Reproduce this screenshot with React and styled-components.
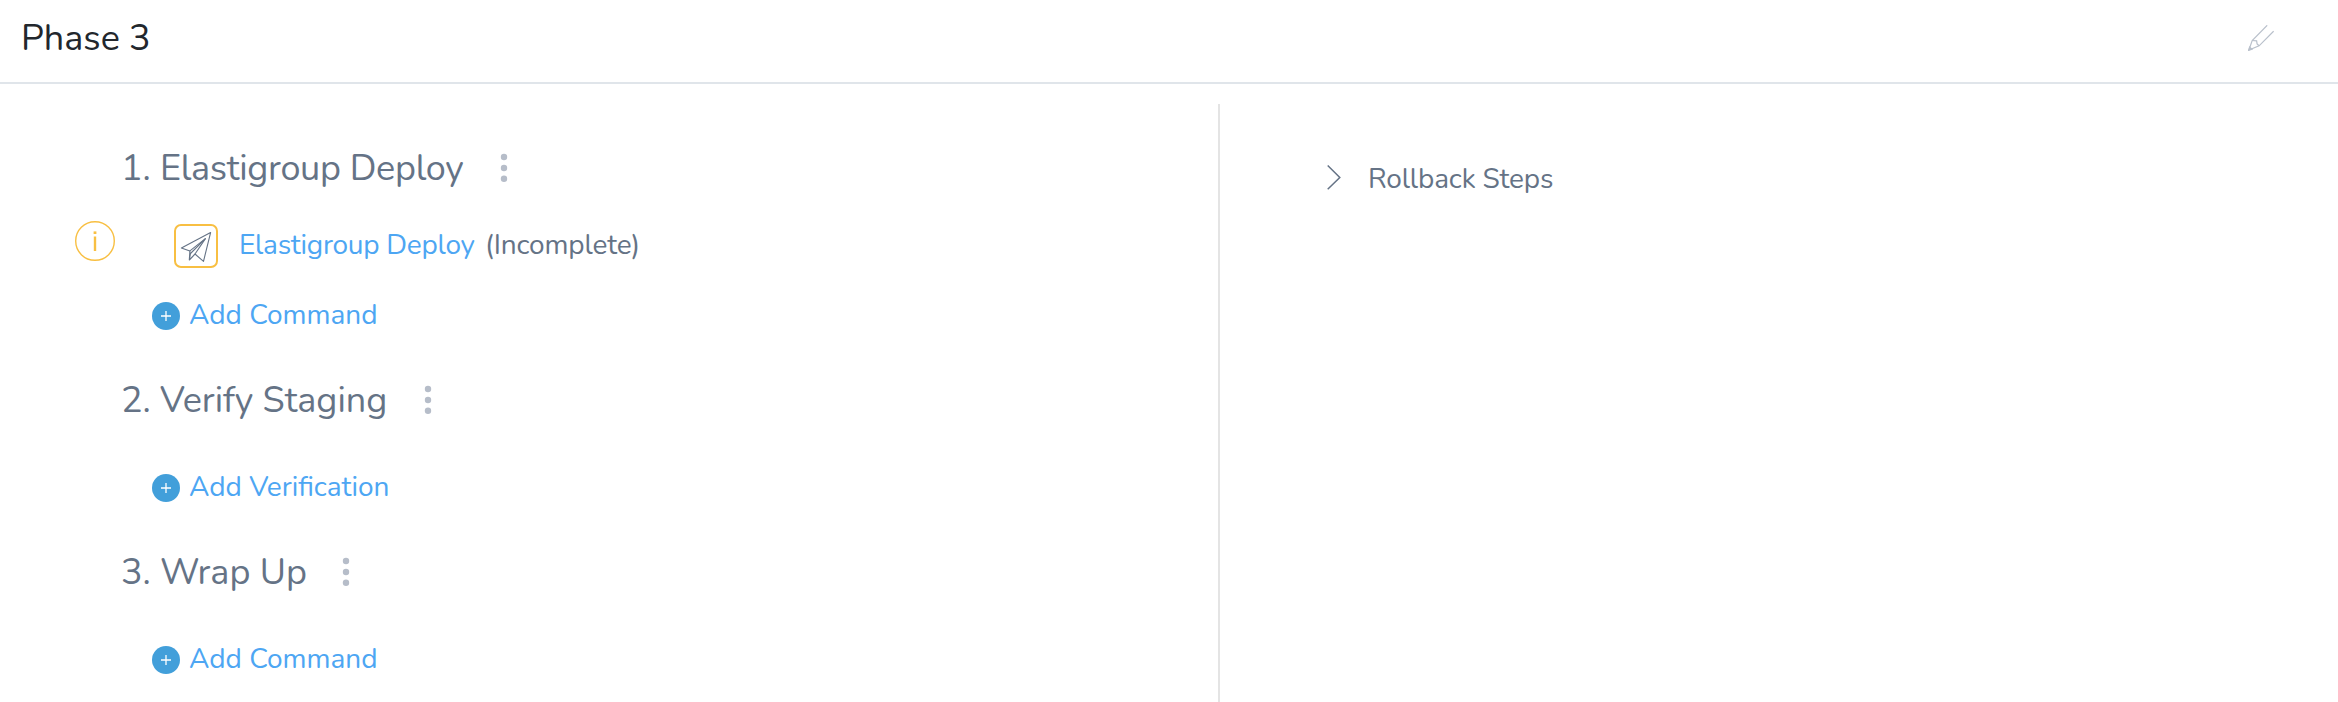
import React from "react";
import styled, { createGlobalStyle } from "styled-components";

const GlobalStyle = createGlobalStyle`
  *, *::before, *::after { box-sizing: border-box; }
  body {
    margin: 0;
    background: #fff;
    color: #657386;
    font-family: Nunito, Lato, "Liberation Sans", sans-serif;
    overflow: hidden;
  }
`;

const Page = styled.div`
  display: flex;
  flex-direction: column;
  height: 702px;
`;

const Header = styled.header`
  display: flex;
  align-items: center;
  justify-content: space-between;
  height: 84px;
  padding: 0 64px 6px 21px;
  border-bottom: 2px solid #e0e5ea;
`;

const Title = styled.h1`
  margin: 0;
  padding-top: 2px;
  font-size: 36px;
  font-weight: 400;
  line-height: 48px;
  color: #22272d;
`;

const Columns = styled.main`
  display: grid;
  grid-template-columns: 1218px 1fr;
  flex: 1;
  min-height: 0;
  padding-top: 20px;
`;

const Steps = styled.div`
  padding: 38px 0 0 75px;
  overflow: hidden;
`;

const Rollback = styled.aside`
  display: flex;
  align-items: flex-start;
  padding: 55px 0 0 104px;
  border-left: 2px solid #e4e4e4;
`;

const RollbackLabel = styled.span`
  margin-left: 27px;
  font-size: 28px;
  line-height: 40px;
  letter-spacing: -0.15px;
`;

const Section = styled.section`
  margin-bottom: 43px;
`;

const Heading = styled.h2`
  display: flex;
  align-items: center;
  height: 48px;
  margin: 0;
  padding-left: 46px;
  font-size: 36px;
  font-weight: 400;
  line-height: 48px;
  white-space: nowrap;
`;

const Index = styled.span`
  width: 39px;
  padding-top: 5px;
`;

const HeadingName = styled.span`
  width: ${(p) => p.$width}px;
  padding-top: 5px;
  letter-spacing: ${(p) => p.$spacing}px;
`;

const StepRow = styled.div`
  display: flex;
  align-items: flex-start;
  height: 47px;
  margin-top: 31px;
  font-size: 28px;
  line-height: 40px;
  white-space: nowrap;
`;

const StepBadge = styled.span`
  display: grid;
  place-items: center;
  width: 44px;
  height: 44px;
  margin: 3px 21px 0 59px;
  border: 2px solid #f8bf42;
  border-radius: 7px;
`;

const StepLink = styled.a`
  width: 246px;
  margin-top: 4px;
  color: #4da6f3;
  letter-spacing: -0.25px;
`;

const StepStatus = styled.span`
  margin-top: 4px;
  letter-spacing: -0.15px;
`;

const AddButton = styled.button`
  display: flex;
  align-items: flex-start;
  gap: 9px;
  height: 36px;
  margin: ${(p) => (p.$afterStep ? 27 : 45)}px 0 0 77px;
  padding: 0;
  border: 0;
  background: none;
  color: #4da6f3;
  font: inherit;
  font-size: 28px;
  line-height: 40px;
`;

const PlusIcon = styled.svg`
  display: block;
  margin-top: 7px;
`;

function Plus() {
  return (
    <PlusIcon width="28" height="28" viewBox="0 0 28 28">
      <circle cx="14" cy="14" r="14" fill="#429fda" />
      <path d="M9 14h10M14 9v10" stroke="#fff" strokeWidth="1.3" />
    </PlusIcon>
  );
}

function Dots() {
  return (
    <svg width="8" height="32" viewBox="0 0 8 32" fill="#b6bdc9">
      <circle cx="4" cy="7" r="3.2" />
      <circle cx="4" cy="18" r="3.2" />
      <circle cx="4" cy="28.8" r="3.2" />
    </svg>
  );
}

function Info() {
  return (
    <svg width="40" height="40" viewBox="0 0 40 40" fill="none" stroke="#f8bf42">
      <circle cx="20" cy="20" r="19.3" strokeWidth="1.4" />
      <path d="M20 15.5v14.5" strokeWidth="2.4" />
      <path d="M20 10.4v2.6" strokeWidth="2.8" />
    </svg>
  );
}

function PaperPlane() {
  return (
    <svg width="32" height="32" viewBox="0 0 32 32" fill="none" stroke="#657386" strokeWidth="1.1" strokeLinejoin="round">
      <path d="M30.6 2.6 1.4 18l8.5 2.9L25.4 8.6 15 24l8.5 7.3z" />
      <path d="M9.9 20.9 9.3 30l5.7-6M9.3 30l1.2-6.5L25.4 8.6" />
    </svg>
  );
}

function Pencil() {
  return (
    <svg width="26" height="26" viewBox="0 0 26 26" fill="none" stroke="#b9c0cb" strokeWidth="1.2">
      <path d="M19.2.3 4.2 15.5.9 25l10.2-4.2L25.6 6.2" />
      <path d="M4.2 15.5l4.4.4.5 3 2 1.9" />
      <path d="M.6 25.3l1-3.3 2.4 2.2z" fill="#b9c0cb" />
    </svg>
  );
}

function Chevron() {
  return (
    <svg width="17" height="31" viewBox="0 0 17 31" fill="none" stroke="#657386" strokeWidth="1.5">
      <path d="M3.7 6.5 15.8 18.5 3.7 30.3" />
    </svg>
  );
}

const sections = [
  {
    name: "Elastigroup Deploy",
    width: 340,
    spacing: -0.3,
    add: "Add Command",
    step: { name: "Elastigroup Deploy", status: "(Incomplete)" },
  },
  { name: "Verify Staging", width: 264, spacing: 0, add: "Add Verification" },
  { name: "Wrap Up", width: 182, spacing: 0, add: "Add Command" },
];

export default function App() {
  return (
    <Page>
      <GlobalStyle />
      <Header>
        <Title>Phase 3</Title>
        <Pencil />
      </Header>
      <Columns>
        <Steps>
          {sections.map((s, i) => (
            <Section key={s.name}>
              <Heading>
                <Index>{i + 1}.</Index>
                <HeadingName $width={s.width} $spacing={s.spacing}>{s.name}</HeadingName>
                <Dots />
              </Heading>
              {s.step && (
                <StepRow>
                  <Info />
                  <StepBadge>
                    <PaperPlane />
                  </StepBadge>
                  <StepLink>{s.step.name}</StepLink>
                  <StepStatus>{s.step.status}</StepStatus>
                </StepRow>
              )}
              <AddButton $afterStep={Boolean(s.step)}>
                <Plus />
                {s.add}
              </AddButton>
            </Section>
          ))}
        </Steps>
        <Rollback>
          <Chevron />
          <RollbackLabel>Rollback Steps</RollbackLabel>
        </Rollback>
      </Columns>
    </Page>
  );
}
